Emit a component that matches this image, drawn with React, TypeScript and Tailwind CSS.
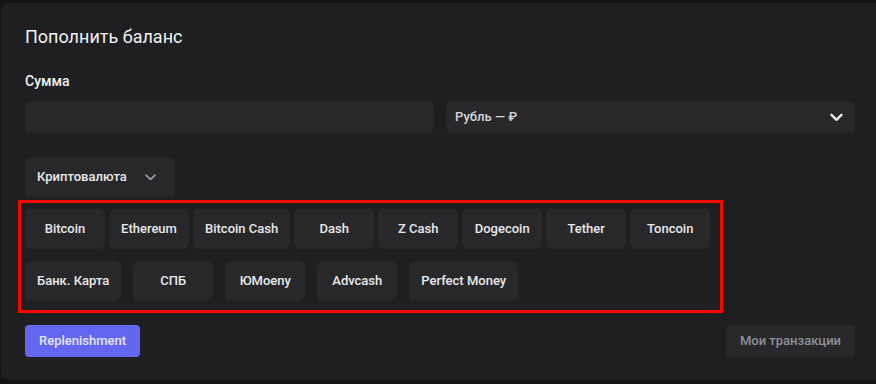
import React from "react";

const row1 = ["Bitcoin", "Ethereum", "Bitcoin Cash", "Dash", "Z Cash", "Dogecoin", "Tether", "Toncoin"];
const row2 = ["Банк. Карта", "СПБ", "ЮMoeny", "Advcash", "Perfect Money"];

function Opt({ label }: { label: string }) {
  return (
    <button className="h-10 min-w-[80px] px-3 rounded-md bg-[#28282a] text-[13px] font-medium text-[#e8e8ea] flex items-center justify-center whitespace-nowrap">
      {label}
    </button>
  );
}

export default function App() {
  return (
    <div
      className="w-[876px] h-[384px] overflow-hidden bg-[#141416] pt-[3px] pl-px"
      style={{ fontFamily: "Roboto, 'Noto Sans', sans-serif" }}
    >
      <div className="w-[875px] h-[377px] rounded-l-lg bg-[#1f1f21] pt-5 pl-6 pr-[21px] flex flex-col">
        <h1 className="text-[18px] leading-7 text-[#f1f1f3] font-normal">Пополнить баланс</h1>
        <div className="mt-5 text-[14px] leading-5 font-medium text-[#f1f1f3]">Сумма</div>
        <div className="mt-2.5 grid grid-cols-2 gap-3">
          <div className="h-8 rounded-md bg-[#28282a]" />
          <div className="h-8 rounded-md bg-[#28282a] flex items-center justify-between pl-[9px] pr-3">
            <span className="text-[13px] font-medium text-[#d6d6da]">Рубль — ₽</span>
            <svg width="13" height="9" viewBox="0 0 13 9" fill="none">
              <path d="M1.5 1.8 6.5 6.8 11.5 1.8" stroke="#e6e6e8" strokeWidth="2.4" strokeLinecap="round" strokeLinejoin="round" />
            </svg>
          </div>
        </div>
        <div className="mt-6 flex">
          <div className="h-10 w-[150px] rounded-md bg-[#28282a] flex items-center pl-3">
            <span className="text-[13px] font-medium text-[#e8e8ea]">Криптовалюта</span>
            <svg className="ml-auto mr-[19px]" width="11" height="7" viewBox="0 0 11 7" fill="none">
              <path d="M1 1.2 5.5 5.5 10 1.2" stroke="#a3a3a8" strokeWidth="1.6" strokeLinecap="round" strokeLinejoin="round" />
            </svg>
          </div>
        </div>
        <div className="mt-[3px] -ml-[7px] w-[705px] border-[3px] border-[#ff0000] pt-[6px] pl-[4px] pb-[9px]">
          <div className="flex gap-1">
            {row1.map((l) => (
              <Opt key={l} label={l} />
            ))}
          </div>
          <div className="mt-3 flex gap-3">
            {row2.map((l) => (
              <Opt key={l} label={l} />
            ))}
          </div>
        </div>
        <div className="mt-3 flex justify-between">
          <button className="h-8 px-[14px] rounded-[4px] bg-[#6366f1] text-[13px] font-medium text-[#e4e6ff]">
            Replenishment
          </button>
          <button className="h-8 px-[14px] rounded-[4px] bg-[#28282a] text-[13px] font-medium text-[#8e9099]">
            Мои транзакции
          </button>
        </div>
      </div>
    </div>
  );
}
